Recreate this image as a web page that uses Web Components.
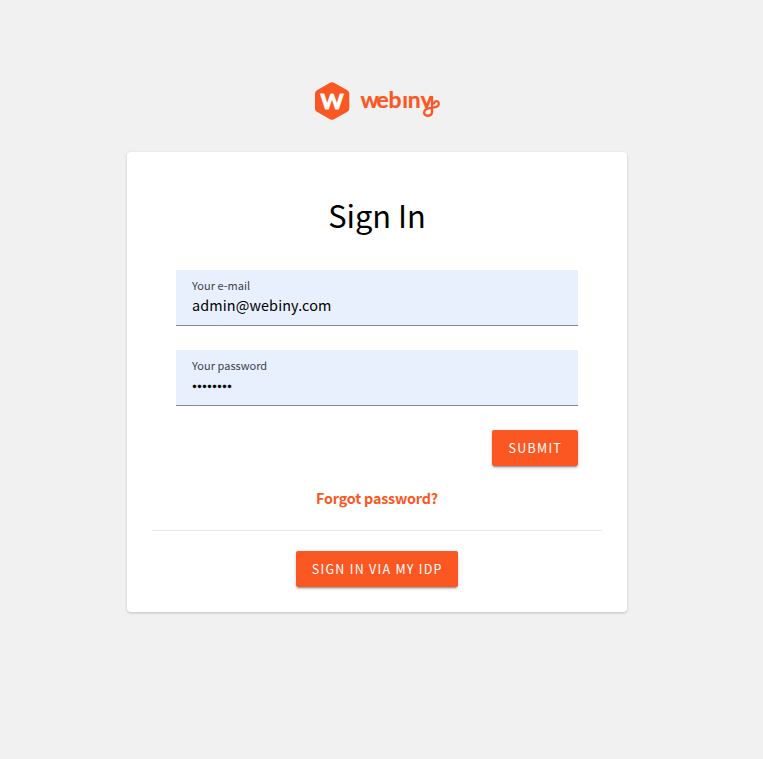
<!DOCTYPE html>
<html lang="en">
<head>
<meta charset="utf-8">
<title>Webiny Sign In</title>
<style>
html,body{margin:0;height:100%}
body{background:#f1f1f1;font-family:"Noto Sans CJK JP","Noto Sans",sans-serif;color:#000}
</style>
</head>
<body>
<sign-in-page></sign-in-page>
<script>
const define = (name, html) => {
  const t = document.createElement('template');
  t.innerHTML = html;
  customElements.define(name, class extends HTMLElement {
    constructor() {
      super();
      this.attachShadow({ mode: 'open' }).append(t.content.cloneNode(true));
    }
  });
};

define('brand-logo', `
<style>
:host{display:block;width:128px;height:42px}
svg{display:block}
text{font-family:Lato,sans-serif;font-weight:700}
</style>
<svg width="128" height="42" viewBox="0 0 128 42">
  <path d="M16 2.7Q18 1.6 20 2.7L33.4 10.3Q35.3 11.4 35.3 13.6V28.4Q35.3 30.6 33.4 31.7L20 39.3Q18 40.4 16 39.3L2.9 31.7Q1 30.6 1 28.4V13.6Q1 11.4 2.9 10.3Z" fill="#fa5723"/>
  <text x="6.5" y="28.8" font-size="21" textLength="23" lengthAdjust="spacingAndGlyphs" fill="#fff" stroke="#fff" stroke-width=".9">W</text>
  <text transform="scale(1.04 1)" x="44.6 60.2 71.6 84.8 90.2 102.4" y="28" font-size="22" fill="#fa5723" stroke="#fa5723" stroke-width=".2">webiny</text>
  <rect x="88.2" y="9" width="5.8" height="6.2" fill="#f1f1f1"/>
  <rect x="105" y="28.2" width="14" height="7" fill="#f1f1f1"/>
  <path d="M118 17V31.8C118 36.9 110.3 37 110.1 32.6C110 28.6 115.6 28 118.5 27.7C123.3 27.1 125.4 25.5 124.7 22.8C124 20.3 120.6 20.8 120 23.4" fill="none" stroke="#fa5723" stroke-width="2.3" stroke-linecap="round"/>
</svg>`);

define('text-field', `
<style>
:host{display:flex;flex-direction:column;box-sizing:border-box;width:402px;height:56px;padding:7px 16px 0;background:#e8f0fe;border-bottom:1px solid #80889a}
.label{font-size:11px;line-height:16px;color:#3f4147;letter-spacing:.02px}
.value{font-size:14.4px;line-height:24px;letter-spacing:.12px}
</style>
<div class="label"><slot name="label"></slot></div>
<div class="value"><slot></slot></div>`);

define('raised-button', `
<style>
:host{display:flex;align-items:center;justify-content:center;box-sizing:border-box;height:36px;width:var(--w);border-radius:2px;background:#fa5723;color:#fff;font-size:12.5px;line-height:36px;letter-spacing:1.27px;text-indent:.6px;white-space:nowrap;box-shadow:0 3px 1px -2px rgba(0,0,0,.2),0 2px 2px rgba(0,0,0,.14),0 1px 5px rgba(0,0,0,.12)}
</style><slot></slot>`);

define('sign-in-card', `
<style>
:host{display:flex;flex-direction:column;align-items:center;box-sizing:border-box;width:500px;height:460px;padding:36px 25px 25px;background:#fff;border-radius:4px;box-shadow:0 1px 3px rgba(0,0,0,.2)}
h1{margin:0 0 28px;font-weight:400;font-size:30.8px;line-height:54px}
text-field{margin-bottom:24px}
.submit{display:flex;justify-content:flex-end;width:402px}
.dots{display:block;font-family:Roboto,sans-serif;font-size:14.8px;-webkit-text-stroke:.4px #000;letter-spacing:0;padding-top:2px}
a{margin-top:20px;color:#fa5723;font-weight:700;font-size:14.3px;line-height:24px;letter-spacing:-.17px}
hr{width:100%;height:1px;border:0;margin:20px 0;background:#e8e8e8}
</style>
<h1>Sign In</h1>
<text-field><span slot="label">Your e-mail</span>admin@webiny.com</text-field>
<text-field><span slot="label">Your password</span><span class="dots">••••••••</span></text-field>
<div class="submit"><raised-button style="--w:86px">SUBMIT</raised-button></div>
<a>Forgot password?</a>
<hr>
<raised-button style="--w:162px">SIGN IN VIA MY IDP</raised-button>`);

define('sign-in-page', `
<style>
:host{display:flex;flex-direction:column;align-items:center;box-sizing:border-box;width:754px;height:759px;padding-top:80px}
sign-in-card{margin-top:30px}
brand-logo{margin-left:2px}
</style>
<brand-logo></brand-logo>
<sign-in-card></sign-in-card>`);
</script>
</body>
</html>
